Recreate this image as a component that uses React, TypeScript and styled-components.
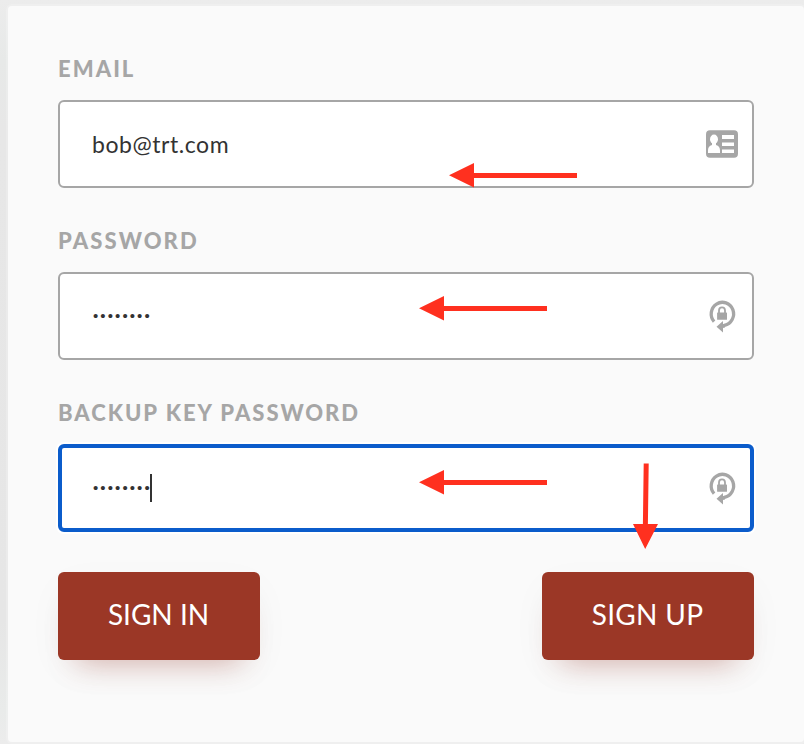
import React from "react";
import styled, { createGlobalStyle } from "styled-components";

const GlobalStyle = createGlobalStyle`
  *, *::before, *::after { box-sizing: border-box; }
  body {
    margin: 0;
    background: #e9e9e9;
    font-family: Lato, "Open Sans", sans-serif;
    overflow: hidden;
  }
`;

const Page = styled.main`
  position: relative;
  height: 744px;
  padding: 6px 0 2px 8px;
  background: linear-gradient(180deg, #ececec 0, #e7e9e8 60px, #e7e7e7 130px, #e6e6e6 620px, #e9ebea 710px, #ececec 744px);
`;

const Card = styled.form`
  display: flex;
  flex-direction: column;
  height: 736px;
  padding: 50px 50px 0;
  border-radius: 4px;
  background: #fafafa;
  box-shadow: 0 0 0 2px rgba(255, 255, 255, 0.2);
`;

const Field = styled.div`
  height: 172px;
`;

const Label = styled.label<{ $tracking: number }>`
  display: block;
  height: 44px;
  line-height: 25px;
  font-size: 22px;
  font-weight: 900;
  letter-spacing: ${(p) => p.$tracking}px;
  white-space: nowrap;
  color: #a6a6a6;
`;

const InputBox = styled.div<{ $focused?: boolean }>`
  display: flex;
  align-items: center;
  justify-content: space-between;
  height: 88px;
  padding: ${(p) => (p.$focused ? "0 12px 0 30px" : "0 14px 0 32px")};
  border: ${(p) => (p.$focused ? "4px solid #0b5ccb" : "2px solid #a6a6a6")};
  border-radius: 6px;
  background: #fff;
  box-shadow: ${(p) => (p.$focused ? "0 0 0 2px #fff" : "none")};
`;

const Value = styled.span`
  font-size: 23px;
  line-height: 28px;
  letter-spacing: 0.55px;
  color: #333;
`;

const Secret = styled.span`
  display: flex;
  align-items: center;
  height: 28px;
  padding-left: 1px;
  font-family: "Liberation Sans", sans-serif;
  font-size: 15px;
  line-height: 28px;
  letter-spacing: 2.1px;
  color: #333;
`;

const Caret = styled.i`
  width: 2px;
  height: 28px;
  margin-left: -2px;
  background: #333;
`;

const Actions = styled.div`
  display: flex;
  justify-content: space-between;
`;

const Button = styled.button<{ $width: number; $tracking?: number }>`
  width: ${(p) => p.$width}px;
  height: 88px;
  padding: 0 1px 5px 0;
  border: 0;
  border-radius: 6px;
  background: #9b3726;
  box-shadow: 0 22px 30px -20px rgba(155, 55, 38, 0.36), 0 12px 40px -6px rgba(60, 20, 20, 0.05);
  color: #fff;
  font: 400 28px/34px Lato, sans-serif;
  letter-spacing: ${(p) => p.$tracking ?? 0}px;
`;

const Arrow = styled.svg<{ $x: number; $y: number }>`
  position: absolute;
  left: ${(p) => p.$x}px;
  top: ${(p) => p.$y}px;
  fill: #ff301f;
  pointer-events: none;
`;

const ContactIcon = () => (
  <svg width="32" height="28" viewBox="0 0 32 28">
    <rect y=".3" width="32" height="27.400" rx="4" fill="#a6a6a6" />
    <ellipse cx="8" cy="9.200" rx="4" ry="4.600" fill="#fff" />
    <path d="M6 12h4v3c2.800.9 4 2.700 4 5.500V23H2v-2.500c0-2.800 1.200-4.600 4-5.500z" fill="#fff" />
    <path d="M16 5h12v4H16zM16 12.500h12v3.500H16zM16 19.500h12V23H16z" fill="#fff" />
  </svg>
);

const GeneratorIcon = () => (
  <svg width="32" height="34" viewBox="0 0 32 34">
    <path d="M8.100 22.700A11.200 11.600 0 1 1 18.500 26.300" fill="none" stroke="#a6a6a6" strokeWidth="3.300" />
    <path d="M10.500 27.700 17 22v3l2-.3v3.800l-2 .5v4.500z" fill="#a6a6a6" />
    <path d="M13 15v-3.600a3 3 0 0 1 6 0V15" fill="none" stroke="#a6a6a6" strokeWidth="1.800" />
    <rect x="11.100" y="13.400" width="9.900" height="7.400" rx=".6" fill="#a6a6a6" />
  </svg>
);

const LeftArrow = ({ x, y }: { x: number; y: number }) => (
  <Arrow $x={x} $y={y} width="128" height="25" viewBox="0 0 128 25">
    <path d="M0 12.200 25 0v10h103v5H25v9.600z" />
  </Arrow>
);

export default function App() {
  return (
    <>
      <GlobalStyle />
      <Page>
        <Card>
          <Field>
            <Label $tracking={2.05}>EMAIL</Label>
            <InputBox>
              <Value>bob@trt.com</Value>
              <ContactIcon />
            </InputBox>
          </Field>
          <Field>
            <Label $tracking={2.1}>PASSWORD</Label>
            <InputBox>
              <Secret>••••••••</Secret>
              <GeneratorIcon />
            </InputBox>
          </Field>
          <Field>
            <Label $tracking={1.97}>BACKUP KEY PASSWORD</Label>
            <InputBox $focused>
              <Secret>
                ••••••••
                <Caret />
              </Secret>
              <GeneratorIcon />
            </InputBox>
          </Field>
          <Actions>
            <Button type="button" $width={202}>SIGN IN</Button>
            <Button type="button" $width={212} $tracking={0.3}>SIGN UP</Button>
          </Actions>
        </Card>
        <LeftArrow x={449} y={163} />
        <LeftArrow x={419} y={296} />
        <LeftArrow x={419} y={470} />
        <Arrow $x={633} $y={463} width="26" height="86" viewBox="0 0 26 86">
          <path d="M10.700 .4h5L14.900 61H25L12.200 86 0 61h9.900z" />
        </Arrow>
      </Page>
    </>
  );
}
